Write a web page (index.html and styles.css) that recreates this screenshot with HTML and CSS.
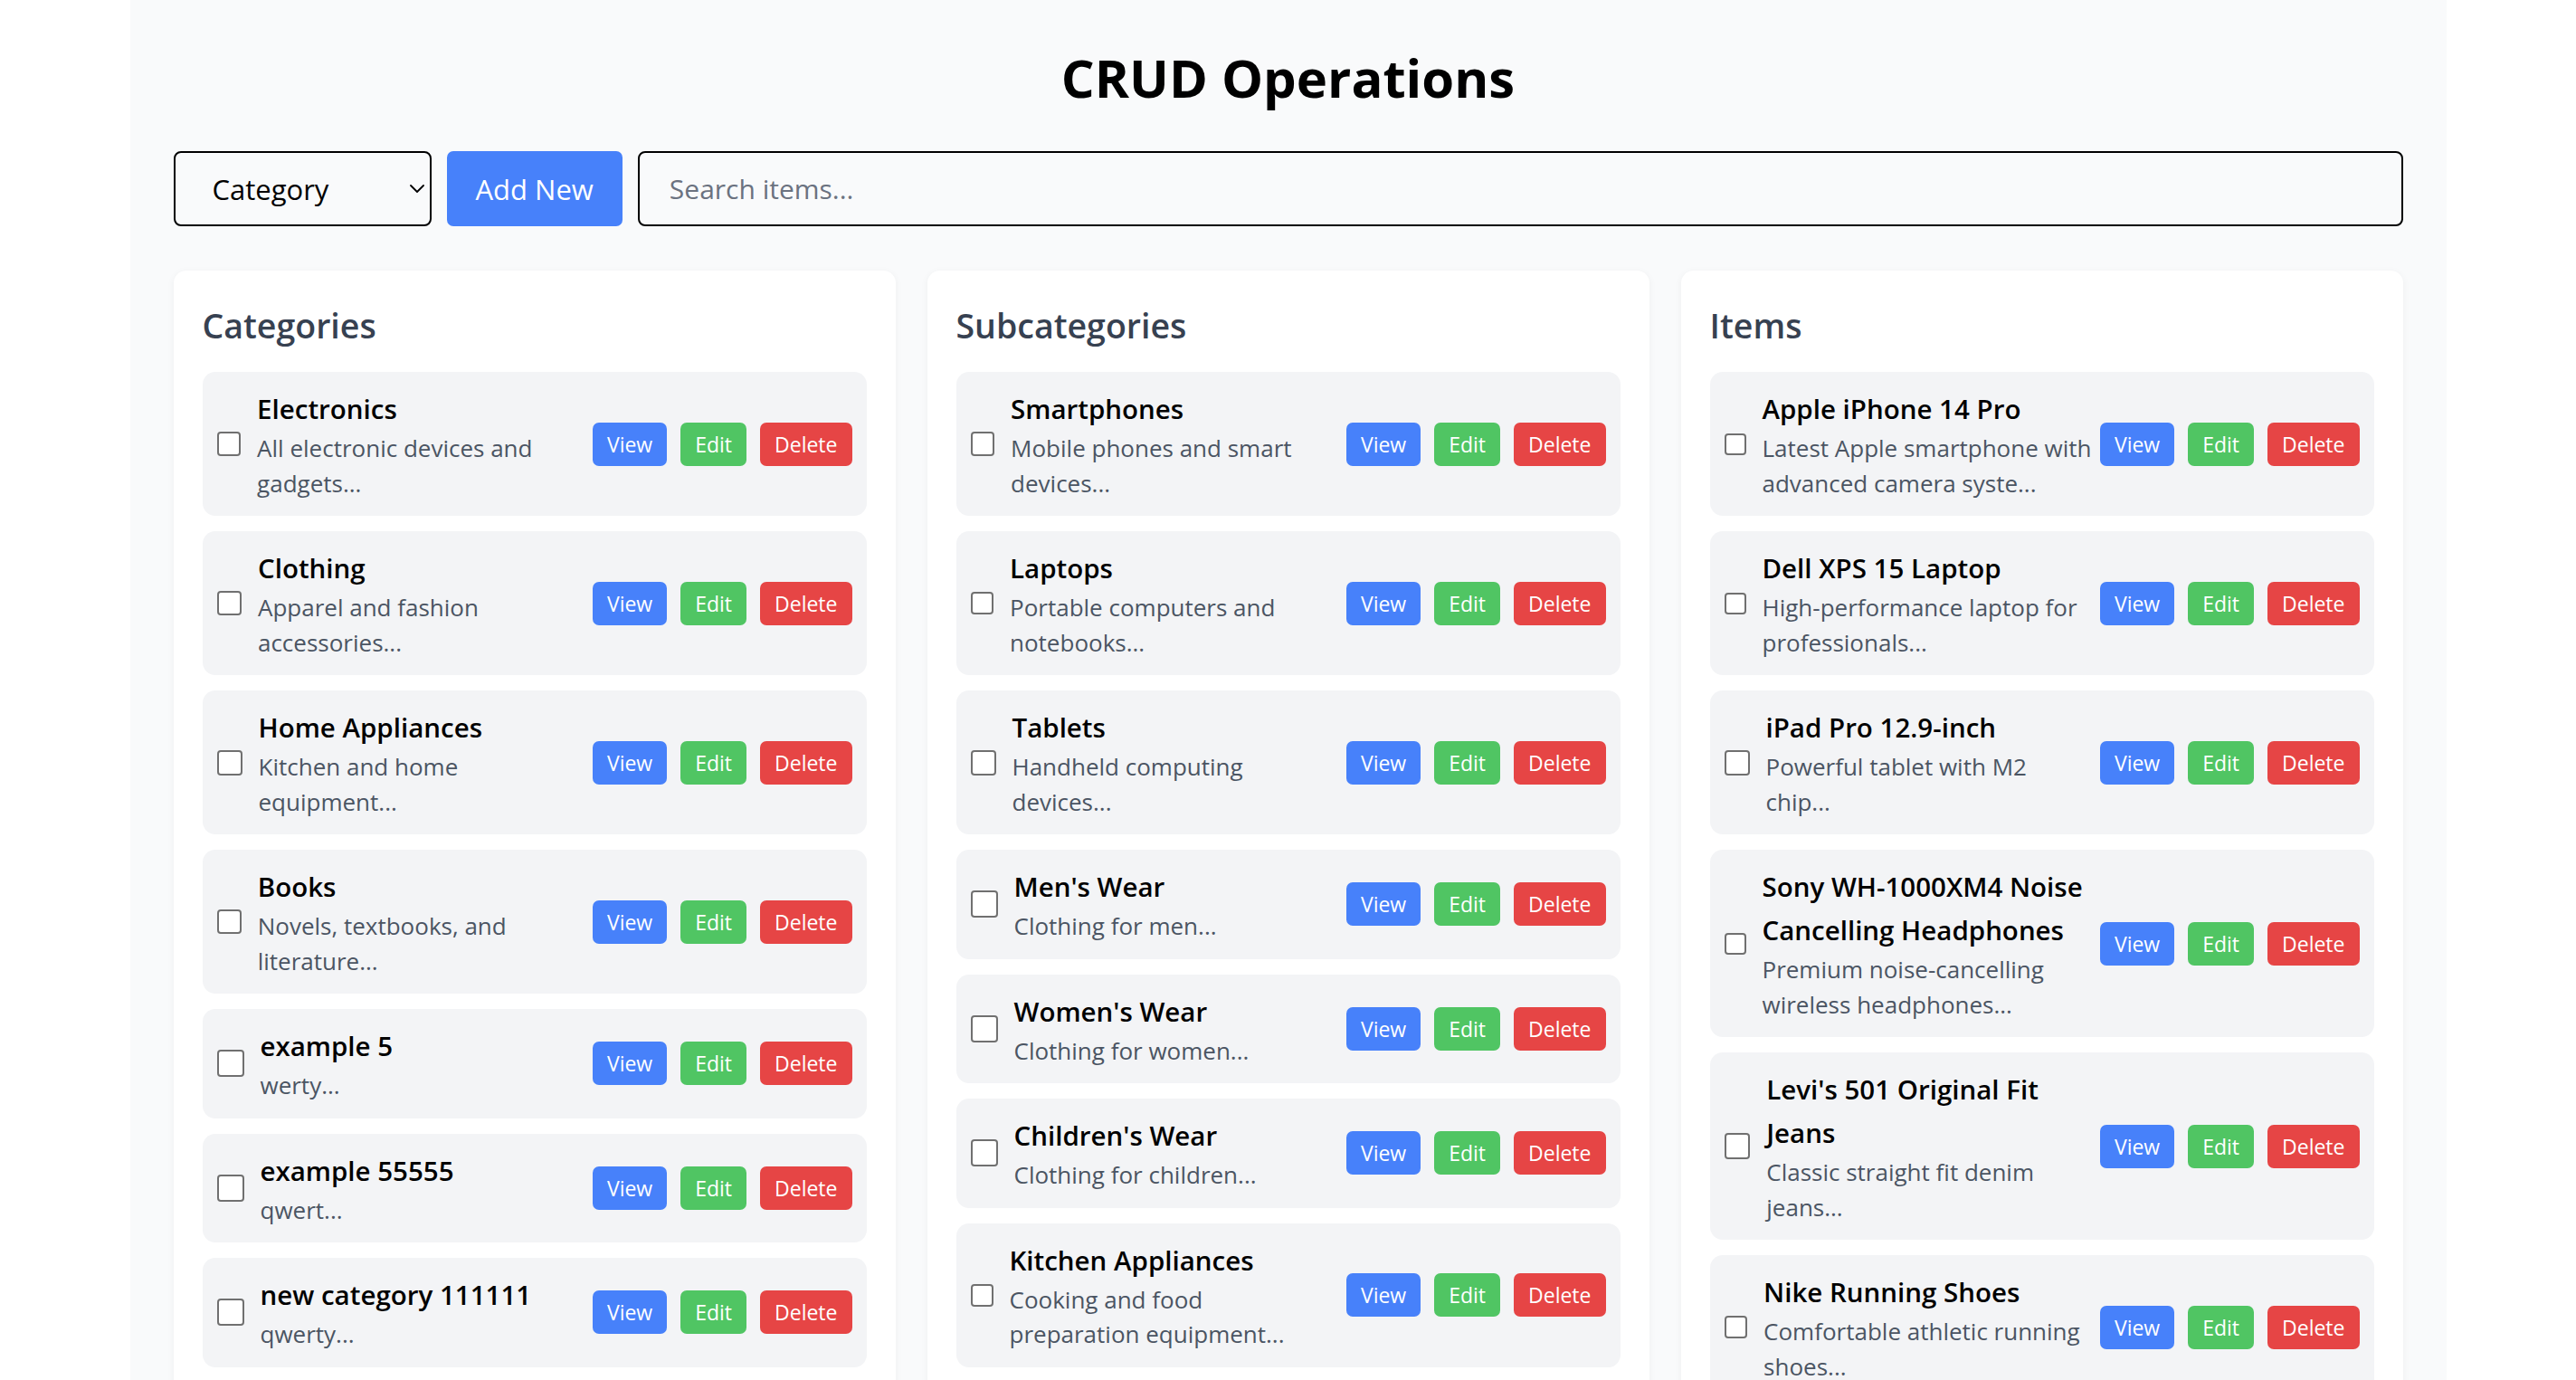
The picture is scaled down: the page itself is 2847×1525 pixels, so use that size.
FILE: index.html
```html
<!DOCTYPE html>
<html lang="en">
<head>
<meta charset="utf-8">
<title>CRUD Operations</title>
<link rel="stylesheet" href="styles.css">
</head>
<body>
<div class="page">
  <h1 class="title">CRUD Operations</h1>
  <div class="controls">
    <div class="select-wrap">
      <select class="select"><option>Category</option><option>Subcategory</option><option>Item</option></select>
      <svg class="chevron" viewBox="0 0 16 9" width="16" height="9"><path d="M1 1l7 7 7-7" fill="none" stroke="#000" stroke-width="1.8" stroke-linecap="round" stroke-linejoin="round"/></svg>
    </div>
    <button class="btn-add">Add New</button>
    <input class="search" type="text" placeholder="Search items...">
  </div>

  <div class="columns">
    <section class="card">
      <h2 class="card-title">Categories</h2>
      <div class="list">
        <div class="row"><div class="row-main"><input type="checkbox" class="check"><div class="row-text"><div class="row-title">Electronics</div><div class="row-desc">All electronic devices and gadgets...</div></div></div><div class="actions"><button class="btn btn-view">View</button><button class="btn btn-edit">Edit</button><button class="btn btn-delete">Delete</button></div></div>
        <div class="row"><div class="row-main"><input type="checkbox" class="check"><div class="row-text"><div class="row-title">Clothing</div><div class="row-desc">Apparel and fashion accessories...</div></div></div><div class="actions"><button class="btn btn-view">View</button><button class="btn btn-edit">Edit</button><button class="btn btn-delete">Delete</button></div></div>
        <div class="row"><div class="row-main"><input type="checkbox" class="check check-mid"><div class="row-text"><div class="row-title">Home Appliances</div><div class="row-desc">Kitchen and home<br>equipment...</div></div></div><div class="actions"><button class="btn btn-view">View</button><button class="btn btn-edit">Edit</button><button class="btn btn-delete">Delete</button></div></div>
        <div class="row"><div class="row-main"><input type="checkbox" class="check"><div class="row-text"><div class="row-title">Books</div><div class="row-desc">Novels, textbooks, and literature...</div></div></div><div class="actions"><button class="btn btn-view">View</button><button class="btn btn-edit">Edit</button><button class="btn btn-delete">Delete</button></div></div>
        <div class="row"><div class="row-main"><input type="checkbox" class="check"><div class="row-text"><div class="row-title">example 5</div><div class="row-desc">werty...</div></div></div><div class="actions"><button class="btn btn-view">View</button><button class="btn btn-edit">Edit</button><button class="btn btn-delete">Delete</button></div></div>
        <div class="row"><div class="row-main"><input type="checkbox" class="check"><div class="row-text"><div class="row-title">example 55555</div><div class="row-desc">qwert...</div></div></div><div class="actions"><button class="btn btn-view">View</button><button class="btn btn-edit">Edit</button><button class="btn btn-delete">Delete</button></div></div>
        <div class="row"><div class="row-main"><input type="checkbox" class="check"><div class="row-text"><div class="row-title">new category 111111</div><div class="row-desc">qwerty...</div></div></div><div class="actions"><button class="btn btn-view">View</button><button class="btn btn-edit">Edit</button><button class="btn btn-delete">Delete</button></div></div>
      </div>
    </section>

    <section class="card">
      <h2 class="card-title">Subcategories</h2>
      <div class="list">
        <div class="row"><div class="row-main"><input type="checkbox" class="check"><div class="row-text"><div class="row-title">Smartphones</div><div class="row-desc">Mobile phones and smart devices...</div></div></div><div class="actions"><button class="btn btn-view">View</button><button class="btn btn-edit">Edit</button><button class="btn btn-delete">Delete</button></div></div>
        <div class="row"><div class="row-main"><input type="checkbox" class="check"><div class="row-text"><div class="row-title">Laptops</div><div class="row-desc">Portable computers and notebooks...</div></div></div><div class="actions"><button class="btn btn-view">View</button><button class="btn btn-edit">Edit</button><button class="btn btn-delete">Delete</button></div></div>
        <div class="row"><div class="row-main"><input type="checkbox" class="check check-mid"><div class="row-text"><div class="row-title">Tablets</div><div class="row-desc">Handheld computing<br>devices...</div></div></div><div class="actions"><button class="btn btn-view">View</button><button class="btn btn-edit">Edit</button><button class="btn btn-delete">Delete</button></div></div>
        <div class="row"><div class="row-main"><input type="checkbox" class="check"><div class="row-text"><div class="row-title">Men's Wear</div><div class="row-desc">Clothing for men...</div></div></div><div class="actions"><button class="btn btn-view">View</button><button class="btn btn-edit">Edit</button><button class="btn btn-delete">Delete</button></div></div>
        <div class="row"><div class="row-main"><input type="checkbox" class="check"><div class="row-text"><div class="row-title">Women's Wear</div><div class="row-desc">Clothing for women...</div></div></div><div class="actions"><button class="btn btn-view">View</button><button class="btn btn-edit">Edit</button><button class="btn btn-delete">Delete</button></div></div>
        <div class="row"><div class="row-main"><input type="checkbox" class="check"><div class="row-text"><div class="row-title">Children's Wear</div><div class="row-desc">Clothing for children...</div></div></div><div class="actions"><button class="btn btn-view">View</button><button class="btn btn-edit">Edit</button><button class="btn btn-delete">Delete</button></div></div>
        <div class="row"><div class="row-main"><input type="checkbox" class="check check-narrow"><div class="row-text"><div class="row-title">Kitchen Appliances</div><div class="row-desc">Cooking and food<br>preparation equipment...</div></div></div><div class="actions"><button class="btn btn-view">View</button><button class="btn btn-edit">Edit</button><button class="btn btn-delete">Delete</button></div></div>
      </div>
    </section>

    <section class="card">
      <h2 class="card-title">Items</h2>
      <div class="list">
        <div class="row"><div class="row-main"><input type="checkbox" class="check"><div class="row-text"><div class="row-title">Apple iPhone 14 Pro</div><div class="row-desc">Latest Apple smartphone with advanced camera syste...</div></div></div><div class="actions"><button class="btn btn-view">View</button><button class="btn btn-edit">Edit</button><button class="btn btn-delete">Delete</button></div></div>
        <div class="row"><div class="row-main"><input type="checkbox" class="check"><div class="row-text"><div class="row-title">Dell XPS 15 Laptop</div><div class="row-desc">High-performance laptop for professionals...</div></div></div><div class="actions"><button class="btn btn-view">View</button><button class="btn btn-edit">Edit</button><button class="btn btn-delete">Delete</button></div></div>
        <div class="row"><div class="row-main"><input type="checkbox" class="check check-mid"><div class="row-text"><div class="row-title">iPad Pro 12.9-inch</div><div class="row-desc">Powerful tablet with M2<br>chip...</div></div></div><div class="actions"><button class="btn btn-view">View</button><button class="btn btn-edit">Edit</button><button class="btn btn-delete">Delete</button></div></div>
        <div class="row"><div class="row-main"><input type="checkbox" class="check"><div class="row-text"><div class="row-title">Sony WH-1000XM4 Noise Cancelling Headphones</div><div class="row-desc">Premium noise-cancelling wireless headphones...</div></div></div><div class="actions"><button class="btn btn-view">View</button><button class="btn btn-edit">Edit</button><button class="btn btn-delete">Delete</button></div></div>
        <div class="row"><div class="row-main"><input type="checkbox" class="check"><div class="row-text"><div class="row-title">Levi's 501 Original Fit Jeans</div><div class="row-desc">Classic straight fit denim jeans...</div></div></div><div class="actions"><button class="btn btn-view">View</button><button class="btn btn-edit">Edit</button><button class="btn btn-delete">Delete</button></div></div>
        <div class="row"><div class="row-main"><input type="checkbox" class="check"><div class="row-text"><div class="row-title">Nike Running Shoes</div><div class="row-desc">Comfortable athletic running shoes...</div></div></div><div class="actions"><button class="btn btn-view">View</button><button class="btn btn-edit">Edit</button><button class="btn btn-delete">Delete</button></div></div>
      </div>
    </section>
  </div>
</div>
</body>
</html>
```

FILE: styles.css
```css
html, body {
  margin: 0;
  padding: 0;
  background: #ffffff;
}

body {
  font-family: "Open Sans", "Noto Sans", sans-serif;
  color: #000;
}

.page {
  width: 2560px;
  margin: 0 auto;
  box-sizing: border-box;
  min-height: 100vh;
  padding: 49px 48px 48px;
  background: #f9fafb;
}

.title {
  margin: 0 0 45px;
  text-align: center;
  font-size: 58px;
  line-height: 73px;
  font-weight: 700;
  color: #000;
}

.controls {
  display: flex;
  gap: 17px;
  height: 83px;
}

.select-wrap {
  position: relative;
  width: 285px;
  flex: 0 0 285px;
}

.select {
  -webkit-appearance: none;
  appearance: none;
  width: 100%;
  height: 100%;
  box-sizing: border-box;
  border: 2px solid #000;
  border-radius: 8px;
  background: transparent;
  padding: 0 40px 0 41px;
  font-family: inherit;
  font-size: 31px;
  color: #000;
}

.chevron {
  position: absolute;
  right: 8px;
  top: 37px;
  width: 16px;
  height: 9px;
  pointer-events: none;
}

.btn-add {
  flex: 0 0 auto;
  border: none;
  border-radius: 7px;
  background: #4781fa;
  color: #fff;
  font-family: inherit;
  font-size: 31px;
  padding: 0 32px;
  height: 83px;
}

.search {
  flex: 1 1 auto;
  min-width: 0;
  box-sizing: border-box;
  height: 83px;
  border: 2px solid #000;
  border-radius: 8px;
  background: transparent;
  padding: 0 33px;
  font-family: inherit;
  font-size: 30px;
  color: #000;
}

.search::placeholder {
  color: #6b7280;
}

.columns {
  margin-top: 49px;
  display: grid;
  grid-template-columns: repeat(3, 1fr);
  gap: 35px;
  align-items: start;
}

.card {
  background: #fff;
  border-radius: 14px;
  padding: 32px;
  box-shadow: 0 2px 8px rgba(0, 0, 0, 0.05);
}

.card-title {
  margin: 0 0 22px;
  font-size: 37.5px;
  line-height: 58px;
  font-weight: 600;
  color: #374151;
}

.list {
  display: flex;
  flex-direction: column;
  gap: 17px;
}

.row {
  display: flex;
  align-items: center;
  justify-content: space-between;
  background: #f3f4f6;
  border-radius: 14px;
  padding: 17px 16px;
}

.row-main {
  display: flex;
  align-items: center;
  gap: 18px;
  min-width: 0;
  flex: 0 1 auto;
}

.check {
  -webkit-appearance: none;
  appearance: none;
  margin: 0;
  box-sizing: border-box;
  flex: 0 1 30px;
  width: 30px;
  min-width: 24px;
  aspect-ratio: 1 / 1;
  height: auto;
  border: 2px solid #707070;
  border-radius: 4px;
  background: #fff;
}

.check-mid {
  flex-basis: 28px;
  width: 28px;
}

.check-narrow {
  flex-basis: 25px;
  width: 25px;
}

.row-text {
  min-width: 0;
  flex: 0 1 auto;
}

.row-title {
  font-size: 29.5px;
  line-height: 48px;
  font-weight: 600;
  color: #000;
}

.row-desc {
  font-size: 26px;
  line-height: 38.5px;
  color: #4b5563;
}

.actions {
  display: flex;
  gap: 15px;
  flex: 0 0 auto;
}

.btn {
  border: none;
  border-radius: 7px;
  height: 48px;
  padding: 0 16px;
  font-family: inherit;
  font-size: 23px;
  color: #fff;
}

.btn-view { background: #4781fa; }
.btn-edit { background: #50c563; }
.btn-delete { background: #e64545; }
```
